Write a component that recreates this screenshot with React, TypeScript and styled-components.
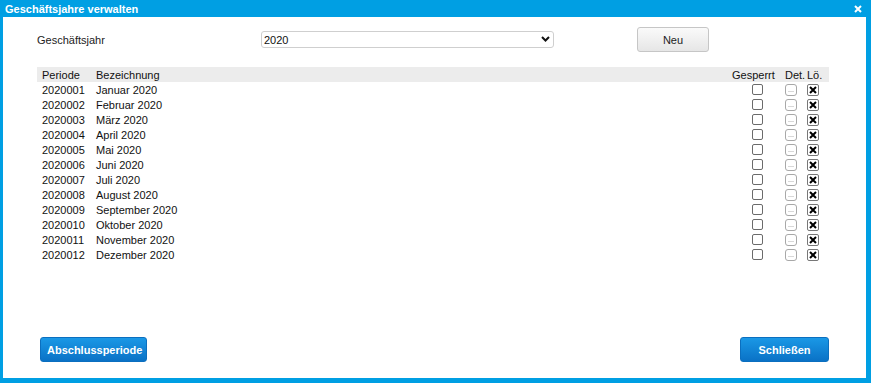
import React, { FC } from "react";
import styled, { createGlobalStyle } from "styled-components";

const GlobalStyle = createGlobalStyle`
  html, body {
    margin: 0;
    padding: 0;
    background: #ffffff;
  }
  body {
    font-family: "Liberation Sans", Arial, sans-serif;
  }
`;

const BLUE = "#009fe3";

const Dialog = styled.div`
  width: 871px;
  height: 383px;
  display: flex;
  flex-direction: column;
  box-sizing: border-box;
  background: ${BLUE};
`;

const TitleBar = styled.div`
  height: 17px;
  display: flex;
  align-items: center;
  justify-content: space-between;
  padding: 0 9px 0 5px;
  color: #ffffff;
  font-size: 11px;
  font-weight: bold;
`;

const CloseBtn = styled.span`
  display: flex;
  align-items: center;
  cursor: pointer;
`;

const Body = styled.div`
  flex: 1;
  display: flex;
  flex-direction: column;
  background: #ffffff;
  margin: 0 5px 5px 3px;
  padding: 10px 37px 16px 34px;
`;

const FormRow = styled.div`
  display: grid;
  grid-template-columns: 224px 293px 83px 72px;
  align-items: center;
  height: 25px;
  font-size: 11px;
  color: #222;
`;

const SelectWrap = styled.div`
  position: relative;
  height: 17px;
`;

const Select = styled.select`
  appearance: none;
  width: 100%;
  height: 17px;
  box-sizing: border-box;
  border: 1px solid #cfcfcf;
  border-radius: 3px;
  background: #ffffff;
  font-family: "Liberation Sans", Arial, sans-serif;
  font-size: 11px;
  color: #111;
  padding: 0 0 0 2px;
  outline: none;
`;

const Chevron = styled.svg`
  position: absolute;
  right: 4px;
  top: 5px;
  pointer-events: none;
`;

const GreyButton = styled.button`
  grid-column: 4;
  height: 25px;
  border: 1px solid #c6c6c6;
  border-radius: 3px;
  background: linear-gradient(#fafafa, #e6e6e6);
  font-family: "Liberation Sans", Arial, sans-serif;
  font-size: 11px;
  color: #222;
  cursor: pointer;
`;

const Table = styled.div`
  margin-top: 15px;
  font-size: 11px;
  color: #111;
`;

const Row = styled.div<{ $head?: boolean }>`
  display: grid;
  grid-template-columns: 54px 1fr 53px 22px 22px;
  align-items: center;
  height: ${(p) => (p.$head ? 15 : 15)}px;
  padding-left: 5px;
  background: ${(p) => (p.$head ? "#ececec" : "transparent")};
`;

const Cell = styled.span`
  line-height: 14px;
`;

const CheckBox = styled.input`
  appearance: none;
  margin: 0 0 0 20px;
  width: 11px;
  height: 11px;
  border: 1px solid #6b6b6b;
  border-radius: 2px;
  background: #fff;
`;

const IconButton = styled.span<{ $dark?: boolean }>`
  width: 12px;
  height: 12px;
  box-sizing: border-box;
  border: 1px solid ${(p) => (p.$dark ? "#777" : "#a8a8a8")};
  border-radius: ${(p) => (p.$dark ? 2 : 3)}px;
  display: flex;
  align-items: center;
  justify-content: center;
`;

const Footer = styled.div`
  margin-top: auto;
  display: flex;
  justify-content: space-between;
  padding-left: 3px;
`;

const BlueButton = styled.button<{ $w: number }>`
  width: ${(p) => p.$w}px;
  height: 25px;
  border: 1px solid #0b6fbf;
  border-radius: 3px;
  background: linear-gradient(#1a98e6, #0a72c6);
  color: #ffffff;
  font-family: "Liberation Sans", Arial, sans-serif;
  font-size: 11px;
  font-weight: bold;
  cursor: pointer;
`;

const months = [
  "Januar", "Februar", "März", "April", "Mai", "Juni",
  "Juli", "August", "September", "Oktober", "November", "Dezember",
];

const App: FC = () => {
  return (
    <>
      <GlobalStyle />
      <Dialog>
        <TitleBar>
          <span>Geschäftsjahre verwalten</span>
          <CloseBtn>
            <svg width="8" height="8" viewBox="0 0 8 8">
              <path d="M1 1 L7 7 M7 1 L1 7" stroke="#fff" strokeWidth="2" />
            </svg>
          </CloseBtn>
        </TitleBar>
        <Body>
          <FormRow>
            <span>Geschäftsjahr</span>
            <SelectWrap>
              <Select defaultValue="2020">
                <option value="2020">2020</option>
              </Select>
              <Chevron width="9" height="6" viewBox="0 0 9 6">
                <path d="M1 1 L4.5 4.5 L8 1" stroke="#111" strokeWidth="2" fill="none" />
              </Chevron>
            </SelectWrap>
            <GreyButton>Neu</GreyButton>
          </FormRow>

          <Table>
            <Row $head>
              <Cell>Periode</Cell>
              <Cell>Bezeichnung</Cell>
              <Cell>Gesperrt</Cell>
              <Cell>Det.</Cell>
              <Cell>Lö.</Cell>
            </Row>
            {months.map((m, i) => (
              <Row key={m}>
                <Cell>{`20200${String(i + 1).padStart(2, "0")}`}</Cell>
                <Cell>{`${m} 2020`}</Cell>
                <CheckBox type="checkbox" readOnly />
                <IconButton>
                  <svg width="6" height="6" viewBox="0 0 6 6">
                    <path d="M0.5 4.5 H5.5" stroke="#b0b0b0" strokeWidth="1" strokeDasharray="1 1" />
                  </svg>
                </IconButton>
                <IconButton $dark>
                  <svg width="8" height="8" viewBox="0 0 8 8">
                    <path d="M1 1 L7 7 M7 1 L1 7" stroke="#000" strokeWidth="2" />
                  </svg>
                </IconButton>
              </Row>
            ))}
          </Table>

          <Footer>
            <BlueButton $w={107}>Abschlussperiode</BlueButton>
            <BlueButton $w={89}>Schließen</BlueButton>
          </Footer>
        </Body>
      </Dialog>
    </>
  );
};

export default App;
